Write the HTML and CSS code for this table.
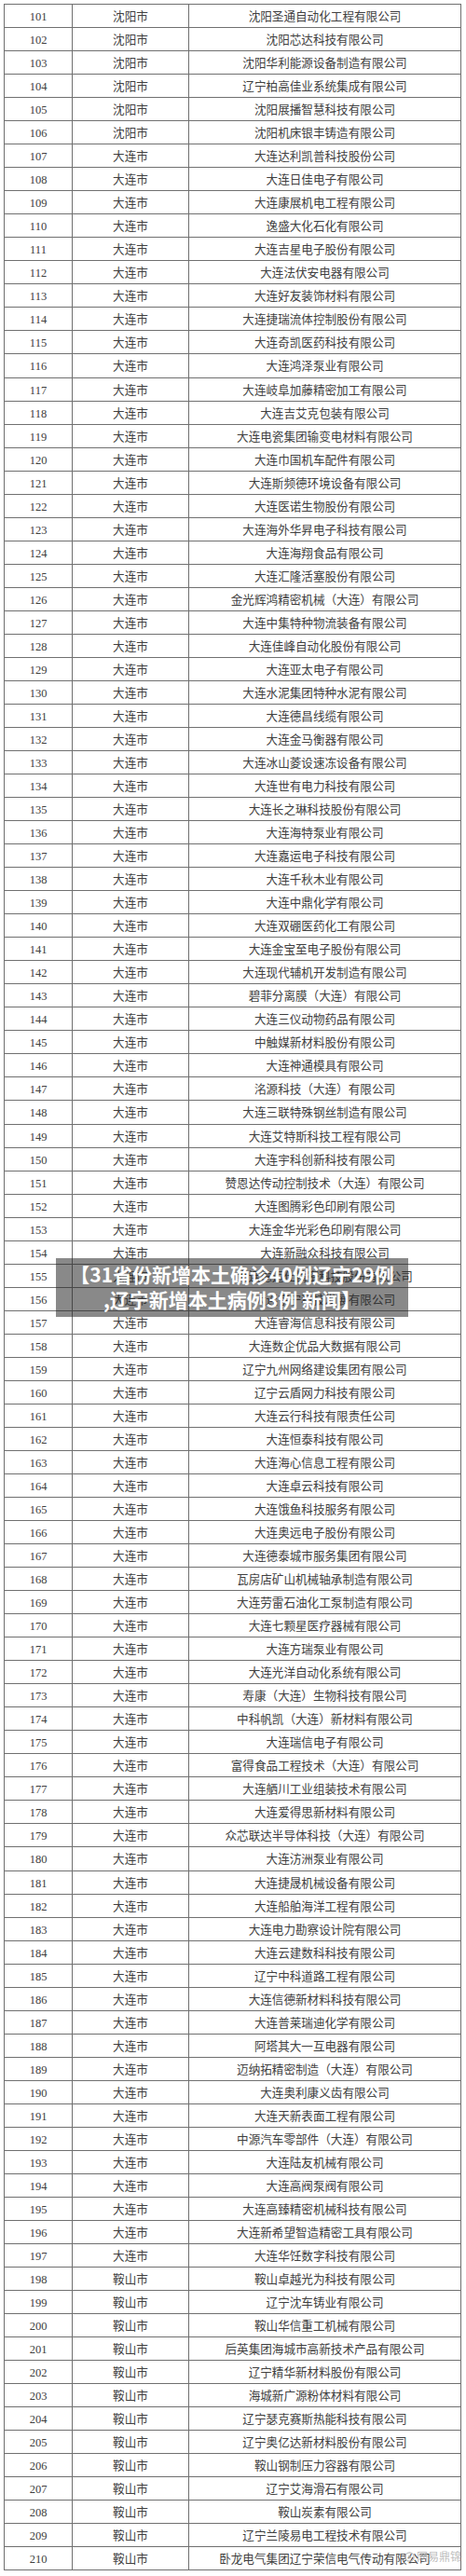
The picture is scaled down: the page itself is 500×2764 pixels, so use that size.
FILE: index.html
```html
<!DOCTYPE html>
<html lang="zh-CN">
<head>
<meta charset="utf-8">
<title>专精特新企业名单</title>
<link rel="stylesheet" href="styles.css">
</head>
<body>
<div class="page">
<table class="list">
<colgroup><col class="c-no"><col class="c-city"><col class="c-name"></colgroup>
<tbody>
<tr><td class="no">101</td><td>沈阳市</td><td>沈阳圣通自动化工程有限公司</td></tr>
<tr><td class="no">102</td><td>沈阳市</td><td>沈阳芯达科技有限公司</td></tr>
<tr><td class="no">103</td><td>沈阳市</td><td>沈阳华利能源设备制造有限公司</td></tr>
<tr><td class="no">104</td><td>沈阳市</td><td>辽宁柏高佳业系统集成有限公司</td></tr>
<tr><td class="no">105</td><td>沈阳市</td><td>沈阳展播智慧科技有限公司</td></tr>
<tr><td class="no">106</td><td>沈阳市</td><td>沈阳机床银丰铸造有限公司</td></tr>
<tr><td class="no">107</td><td>大连市</td><td>大连达利凯普科技股份公司</td></tr>
<tr><td class="no">108</td><td>大连市</td><td>大连日佳电子有限公司</td></tr>
<tr><td class="no">109</td><td>大连市</td><td>大连康展机电工程有限公司</td></tr>
<tr><td class="no">110</td><td>大连市</td><td>逸盛大化石化有限公司</td></tr>
<tr><td class="no">111</td><td>大连市</td><td>大连吉星电子股份有限公司</td></tr>
<tr><td class="no">112</td><td>大连市</td><td>大连法伏安电器有限公司</td></tr>
<tr><td class="no">113</td><td>大连市</td><td>大连好友装饰材料有限公司</td></tr>
<tr><td class="no">114</td><td>大连市</td><td>大连捷瑞流体控制股份有限公司</td></tr>
<tr><td class="no">115</td><td>大连市</td><td>大连奇凯医药科技有限公司</td></tr>
<tr><td class="no">116</td><td>大连市</td><td>大连鸿泽泵业有限公司</td></tr>
<tr><td class="no">117</td><td>大连市</td><td>大连岐阜加藤精密加工有限公司</td></tr>
<tr><td class="no">118</td><td>大连市</td><td>大连吉艾克包装有限公司</td></tr>
<tr><td class="no">119</td><td>大连市</td><td>大连电瓷集团输变电材料有限公司</td></tr>
<tr><td class="no">120</td><td>大连市</td><td>大连巾国机车配件有限公司</td></tr>
<tr><td class="no">121</td><td>大连市</td><td>大连斯频德环境设备有限公司</td></tr>
<tr><td class="no">122</td><td>大连市</td><td>大连医诺生物股份有限公司</td></tr>
<tr><td class="no">123</td><td>大连市</td><td>大连海外华昇电子科技有限公司</td></tr>
<tr><td class="no">124</td><td>大连市</td><td>大连海翔食品有限公司</td></tr>
<tr><td class="no">125</td><td>大连市</td><td>大连汇隆活塞股份有限公司</td></tr>
<tr><td class="no">126</td><td>大连市</td><td>金光辉鸿精密机械（大连）有限公司</td></tr>
<tr><td class="no">127</td><td>大连市</td><td>大连中集特种物流装备有限公司</td></tr>
<tr><td class="no">128</td><td>大连市</td><td>大连佳峰自动化股份有限公司</td></tr>
<tr><td class="no">129</td><td>大连市</td><td>大连亚太电子有限公司</td></tr>
<tr><td class="no">130</td><td>大连市</td><td>大连水泥集团特种水泥有限公司</td></tr>
<tr><td class="no">131</td><td>大连市</td><td>大连德昌线缆有限公司</td></tr>
<tr><td class="no">132</td><td>大连市</td><td>大连金马衡器有限公司</td></tr>
<tr><td class="no">133</td><td>大连市</td><td>大连冰山菱设速冻设备有限公司</td></tr>
<tr><td class="no">134</td><td>大连市</td><td>大连世有电力科技有限公司</td></tr>
<tr><td class="no">135</td><td>大连市</td><td>大连长之琳科技股份有限公司</td></tr>
<tr><td class="no">136</td><td>大连市</td><td>大连海特泵业有限公司</td></tr>
<tr><td class="no">137</td><td>大连市</td><td>大连嘉运电子科技有限公司</td></tr>
<tr><td class="no">138</td><td>大连市</td><td>大连千秋木业有限公司</td></tr>
<tr><td class="no">139</td><td>大连市</td><td>大连中鼎化学有限公司</td></tr>
<tr><td class="no">140</td><td>大连市</td><td>大连双硼医药化工有限公司</td></tr>
<tr><td class="no">141</td><td>大连市</td><td>大连金宝至电子股份有限公司</td></tr>
<tr><td class="no">142</td><td>大连市</td><td>大连现代辅机开发制造有限公司</td></tr>
<tr><td class="no">143</td><td>大连市</td><td>碧菲分离膜（大连）有限公司</td></tr>
<tr><td class="no">144</td><td>大连市</td><td>大连三仪动物药品有限公司</td></tr>
<tr><td class="no">145</td><td>大连市</td><td>中触媒新材料股份有限公司</td></tr>
<tr><td class="no">146</td><td>大连市</td><td>大连神通模具有限公司</td></tr>
<tr><td class="no">147</td><td>大连市</td><td>洺源科技（大连）有限公司</td></tr>
<tr><td class="no">148</td><td>大连市</td><td>大连三联特殊钢丝制造有限公司</td></tr>
<tr><td class="no">149</td><td>大连市</td><td>大连艾特斯科技工程有限公司</td></tr>
<tr><td class="no">150</td><td>大连市</td><td>大连宇科创新科技有限公司</td></tr>
<tr><td class="no">151</td><td>大连市</td><td>赞恩达传动控制技术（大连）有限公司</td></tr>
<tr><td class="no">152</td><td>大连市</td><td>大连图腾彩色印刷有限公司</td></tr>
<tr><td class="no">153</td><td>大连市</td><td>大连金华光彩色印刷有限公司</td></tr>
<tr><td class="no">154</td><td>大连市</td><td>大连新融众科技有限公司</td></tr>
<tr><td class="no">155</td><td>大连市</td><td>大连德迈仕精密科技股份有限公司</td></tr>
<tr><td class="no">156</td><td>大连市</td><td>大连宇宁科技发展有限公司</td></tr>
<tr><td class="no">157</td><td>大连市</td><td>大连睿海信息科技有限公司</td></tr>
<tr><td class="no">158</td><td>大连市</td><td>大连数企优品大数据有限公司</td></tr>
<tr><td class="no">159</td><td>大连市</td><td>辽宁九州网络建设集团有限公司</td></tr>
<tr><td class="no">160</td><td>大连市</td><td>辽宁云盾网力科技有限公司</td></tr>
<tr><td class="no">161</td><td>大连市</td><td>大连云行科技有限责任公司</td></tr>
<tr><td class="no">162</td><td>大连市</td><td>大连恒泰科技有限公司</td></tr>
<tr><td class="no">163</td><td>大连市</td><td>大连海心信息工程有限公司</td></tr>
<tr><td class="no">164</td><td>大连市</td><td>大连卓云科技有限公司</td></tr>
<tr><td class="no">165</td><td>大连市</td><td>大连饿鱼科技服务有限公司</td></tr>
<tr><td class="no">166</td><td>大连市</td><td>大连奥远电子股份有限公司</td></tr>
<tr><td class="no">167</td><td>大连市</td><td>大连德泰城市服务集团有限公司</td></tr>
<tr><td class="no">168</td><td>大连市</td><td>瓦房店矿山机械轴承制造有限公司</td></tr>
<tr><td class="no">169</td><td>大连市</td><td>大连劳雷石油化工泵制造有限公司</td></tr>
<tr><td class="no">170</td><td>大连市</td><td>大连七颗星医疗器械有限公司</td></tr>
<tr><td class="no">171</td><td>大连市</td><td>大连方瑞泵业有限公司</td></tr>
<tr><td class="no">172</td><td>大连市</td><td>大连光洋自动化系统有限公司</td></tr>
<tr><td class="no">173</td><td>大连市</td><td>寿康（大连）生物科技有限公司</td></tr>
<tr><td class="no">174</td><td>大连市</td><td>中科帆凯（大连）新材料有限公司</td></tr>
<tr><td class="no">175</td><td>大连市</td><td>大连瑞信电子有限公司</td></tr>
<tr><td class="no">176</td><td>大连市</td><td>富得食品工程技术（大连）有限公司</td></tr>
<tr><td class="no">177</td><td>大连市</td><td>大连舾川工业组装技术有限公司</td></tr>
<tr><td class="no">178</td><td>大连市</td><td>大连爱得思新材料有限公司</td></tr>
<tr><td class="no">179</td><td>大连市</td><td>众芯联达半导体科技（大连）有限公司</td></tr>
<tr><td class="no">180</td><td>大连市</td><td>大连汸洲泵业有限公司</td></tr>
<tr><td class="no">181</td><td>大连市</td><td>大连捷晟机械设备有限公司</td></tr>
<tr><td class="no">182</td><td>大连市</td><td>大连船舶海洋工程有限公司</td></tr>
<tr><td class="no">183</td><td>大连市</td><td>大连电力勘察设计院有限公司</td></tr>
<tr><td class="no">184</td><td>大连市</td><td>大连云建数科科技有限公司</td></tr>
<tr><td class="no">185</td><td>大连市</td><td>辽宁中科道路工程有限公司</td></tr>
<tr><td class="no">186</td><td>大连市</td><td>大连信德新材料科技有限公司</td></tr>
<tr><td class="no">187</td><td>大连市</td><td>大连普莱瑞迪化学有限公司</td></tr>
<tr><td class="no">188</td><td>大连市</td><td>阿塔其大一互电器有限公司</td></tr>
<tr><td class="no">189</td><td>大连市</td><td>迈纳拓精密制造（大连）有限公司</td></tr>
<tr><td class="no">190</td><td>大连市</td><td>大连奥利康义齿有限公司</td></tr>
<tr><td class="no">191</td><td>大连市</td><td>大连天新表面工程有限公司</td></tr>
<tr><td class="no">192</td><td>大连市</td><td>中源汽车零部件（大连）有限公司</td></tr>
<tr><td class="no">193</td><td>大连市</td><td>大连陆友机械有限公司</td></tr>
<tr><td class="no">194</td><td>大连市</td><td>大连高阀泵阀有限公司</td></tr>
<tr><td class="no">195</td><td>大连市</td><td>大连高臻精密机械科技有限公司</td></tr>
<tr><td class="no">196</td><td>大连市</td><td>大连新希望智造精密工具有限公司</td></tr>
<tr><td class="no">197</td><td>大连市</td><td>大连华饪数字科技有限公司</td></tr>
<tr><td class="no">198</td><td>鞍山市</td><td>鞍山卓越光为科技有限公司</td></tr>
<tr><td class="no">199</td><td>鞍山市</td><td>辽宁沈车铸业有限公司</td></tr>
<tr><td class="no">200</td><td>鞍山市</td><td>鞍山华信重工机械有限公司</td></tr>
<tr><td class="no">201</td><td>鞍山市</td><td>后英集团海城市高新技术产品有限公司</td></tr>
<tr><td class="no">202</td><td>鞍山市</td><td>辽宁精华新材料股份有限公司</td></tr>
<tr><td class="no">203</td><td>鞍山市</td><td>海城新广源粉体材料有限公司</td></tr>
<tr><td class="no">204</td><td>鞍山市</td><td>辽宁瑟克赛斯热能科技有限公司</td></tr>
<tr><td class="no">205</td><td>鞍山市</td><td>辽宁奥亿达新材料股份有限公司</td></tr>
<tr><td class="no">206</td><td>鞍山市</td><td>鞍山钢制压力容器有限公司</td></tr>
<tr><td class="no">207</td><td>鞍山市</td><td>辽宁艾海滑石有限公司</td></tr>
<tr><td class="no">208</td><td>鞍山市</td><td>鞍山炭素有限公司</td></tr>
<tr><td class="no">209</td><td>鞍山市</td><td>辽宁兰陵易电工程技术有限公司</td></tr>
<tr><td class="no">210</td><td>鞍山市</td><td>卧龙电气集团辽宁荣信电气传动有限公司</td></tr>
</tbody>
</table>
<div class="caption">
<span class="cap-line">【31省份新增本土确诊40例辽宁29例</span>
<span class="cap-line">,辽宁新增本土病例3例 新闻】</span>
</div>
<div class="watermark"><svg class="wm-icon" viewBox="0 0 12 12" width="11" height="11"><circle cx="6" cy="6" r="5" fill="none" stroke="currentColor" stroke-width="1.4"/><circle cx="6" cy="6" r="1.8" fill="currentColor"/></svg><span>网易鼎锦</span></div>
</div>
</body>
</html>
```

FILE: styles.css
```css
html, body {
  margin: 0;
  padding: 0;
  background: #ffffff;
}

.page {
  position: relative;
  width: 500px;
  height: 2764px;
  box-sizing: border-box;
  padding: 4px 6px 0 4px;
}

.list {
  width: 490px;
  table-layout: fixed;
  border-collapse: collapse;
  border: 1px solid #707070;
  font-family: "Liberation Serif", "Noto Sans CJK SC", serif;
  color: #404040;
}

.c-no { width: 73px; }
.c-city { width: 125px; }
.c-name { width: 292px; }

.list tr {
  height: 25.045px;
}

.list td {
  border: 1px solid #707070;
  padding: 2px 0 0 0;
  text-align: center;
  vertical-align: middle;
  font-size: 12.6px;
  font-weight: 400;
  line-height: 18px;
  white-space: nowrap;
  overflow: hidden;
}

.list td.no {
  font-size: 12.5px;
}

.caption {
  position: absolute;
  left: 60px;
  top: 1350px;
  width: 378px;
  height: 63px;
  box-sizing: border-box;
  padding-top: 4px;
  background: rgba(40, 40, 40, 0.55);
  color: #ffffff;
  font-family: "Noto Sans CJK SC", sans-serif;
  font-weight: 700;
  font-size: 21px;
  line-height: 27px;
  text-align: center;
}

.cap-line {
  display: block;
  white-space: nowrap;
}

.watermark {
  position: absolute;
  left: 434px;
  top: 2735px;
  display: flex;
  align-items: center;
  gap: 2px;
  color: rgba(175, 175, 175, 0.85);
  font-family: "Noto Sans CJK SC", sans-serif;
  font-size: 12px;
  line-height: 16px;
}

.wm-icon {
  display: block;
}
```
